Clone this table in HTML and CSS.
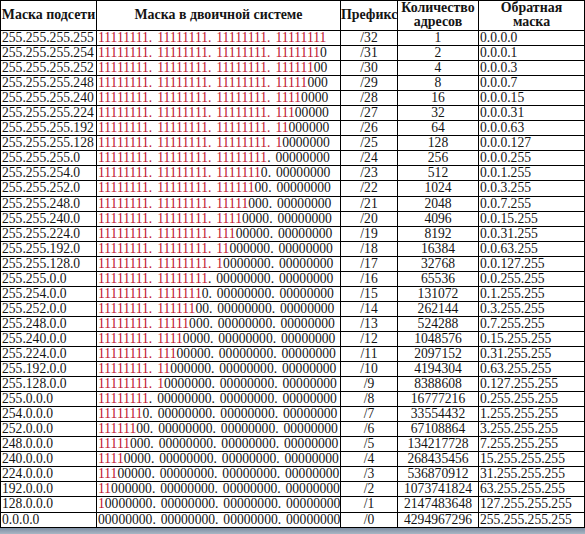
FILE: index.html
```html
<!DOCTYPE html>
<html lang="ru">
<head>
<meta charset="utf-8">
<title>Маски подсети</title>
<link rel="stylesheet" href="styles.css">
</head>
<body>
<div class="page">
<table class="masks">
<colgroup>
<col class="c1"><col class="c2"><col class="c3"><col class="c4"><col class="c5">
</colgroup>
<thead>
<tr><th>Маска подсети</th><th>Маска в двоичной системе</th><th>Префикс</th><th>Количество<br>адресов</th><th>Обратная<br>маска</th></tr>
</thead>
<tbody>
<tr><td>255.255.255.255</td><td class="bin"><span class="on">11111111. 11111111. 11111111. 11111111</span></td><td class="ctr">/32</td><td class="ctr">1</td><td>0.0.0.0</td></tr>
<tr><td>255.255.255.254</td><td class="bin"><span class="on">11111111. 11111111. 11111111. 1111111</span>0</td><td class="ctr">/31</td><td class="ctr">2</td><td>0.0.0.1</td></tr>
<tr><td>255.255.255.252</td><td class="bin"><span class="on">11111111. 11111111. 11111111. 111111</span>00</td><td class="ctr">/30</td><td class="ctr">4</td><td>0.0.0.3</td></tr>
<tr><td>255.255.255.248</td><td class="bin"><span class="on">11111111. 11111111. 11111111. 11111</span>000</td><td class="ctr">/29</td><td class="ctr">8</td><td>0.0.0.7</td></tr>
<tr><td>255.255.255.240</td><td class="bin"><span class="on">11111111. 11111111. 11111111. 1111</span>0000</td><td class="ctr">/28</td><td class="ctr">16</td><td>0.0.0.15</td></tr>
<tr><td>255.255.255.224</td><td class="bin"><span class="on">11111111. 11111111. 11111111. 111</span>00000</td><td class="ctr">/27</td><td class="ctr">32</td><td>0.0.0.31</td></tr>
<tr><td>255.255.255.192</td><td class="bin"><span class="on">11111111. 11111111. 11111111. 11</span>000000</td><td class="ctr">/26</td><td class="ctr">64</td><td>0.0.0.63</td></tr>
<tr><td>255.255.255.128</td><td class="bin"><span class="on">11111111. 11111111. 11111111. 1</span>0000000</td><td class="ctr">/25</td><td class="ctr">128</td><td>0.0.0.127</td></tr>
<tr><td>255.255.255.0</td><td class="bin"><span class="on">11111111. 11111111. 11111111</span>. 00000000</td><td class="ctr">/24</td><td class="ctr">256</td><td>0.0.0.255</td></tr>
<tr><td>255.255.254.0</td><td class="bin"><span class="on">11111111. 11111111. 1111111</span>0. 00000000</td><td class="ctr">/23</td><td class="ctr">512</td><td>0.0.1.255</td></tr>
<tr><td>255.255.252.0</td><td class="bin"><span class="on">11111111. 11111111. 111111</span>00. 00000000</td><td class="ctr">/22</td><td class="ctr">1024</td><td>0.0.3.255</td></tr>
<tr><td>255.255.248.0</td><td class="bin"><span class="on">11111111. 11111111. 11111</span>000. 00000000</td><td class="ctr">/21</td><td class="ctr">2048</td><td>0.0.7.255</td></tr>
<tr><td>255.255.240.0</td><td class="bin"><span class="on">11111111. 11111111. 1111</span>0000. 00000000</td><td class="ctr">/20</td><td class="ctr">4096</td><td>0.0.15.255</td></tr>
<tr><td>255.255.224.0</td><td class="bin"><span class="on">11111111. 11111111. 111</span>00000. 00000000</td><td class="ctr">/19</td><td class="ctr">8192</td><td>0.0.31.255</td></tr>
<tr><td>255.255.192.0</td><td class="bin"><span class="on">11111111. 11111111. 11</span>000000. 00000000</td><td class="ctr">/18</td><td class="ctr">16384</td><td>0.0.63.255</td></tr>
<tr><td>255.255.128.0</td><td class="bin"><span class="on">11111111. 11111111. 1</span>0000000. 00000000</td><td class="ctr">/17</td><td class="ctr">32768</td><td>0.0.127.255</td></tr>
<tr><td>255.255.0.0</td><td class="bin"><span class="on">11111111. 11111111</span>. 00000000. 00000000</td><td class="ctr">/16</td><td class="ctr">65536</td><td>0.0.255.255</td></tr>
<tr><td>255.254.0.0</td><td class="bin"><span class="on">11111111. 1111111</span>0. 00000000. 00000000</td><td class="ctr">/15</td><td class="ctr">131072</td><td>0.1.255.255</td></tr>
<tr><td>255.252.0.0</td><td class="bin"><span class="on">11111111. 111111</span>00. 00000000. 00000000</td><td class="ctr">/14</td><td class="ctr">262144</td><td>0.3.255.255</td></tr>
<tr><td>255.248.0.0</td><td class="bin"><span class="on">11111111. 11111</span>000. 00000000. 00000000</td><td class="ctr">/13</td><td class="ctr">524288</td><td>0.7.255.255</td></tr>
<tr><td>255.240.0.0</td><td class="bin"><span class="on">11111111. 1111</span>0000. 00000000. 00000000</td><td class="ctr">/12</td><td class="ctr">1048576</td><td>0.15.255.255</td></tr>
<tr><td>255.224.0.0</td><td class="bin"><span class="on">11111111. 111</span>00000. 00000000. 00000000</td><td class="ctr">/11</td><td class="ctr">2097152</td><td>0.31.255.255</td></tr>
<tr><td>255.192.0.0</td><td class="bin"><span class="on">11111111. 11</span>000000. 00000000. 00000000</td><td class="ctr">/10</td><td class="ctr">4194304</td><td>0.63.255.255</td></tr>
<tr><td>255.128.0.0</td><td class="bin"><span class="on">11111111. 1</span>0000000. 00000000. 00000000</td><td class="ctr">/9</td><td class="ctr">8388608</td><td>0.127.255.255</td></tr>
<tr><td>255.0.0.0</td><td class="bin"><span class="on">11111111</span>. 00000000. 00000000. 00000000</td><td class="ctr">/8</td><td class="ctr">16777216</td><td>0.255.255.255</td></tr>
<tr><td>254.0.0.0</td><td class="bin"><span class="on">1111111</span>0. 00000000. 00000000. 00000000</td><td class="ctr">/7</td><td class="ctr">33554432</td><td>1.255.255.255</td></tr>
<tr><td>252.0.0.0</td><td class="bin"><span class="on">111111</span>00. 00000000. 00000000. 00000000</td><td class="ctr">/6</td><td class="ctr">67108864</td><td>3.255.255.255</td></tr>
<tr><td>248.0.0.0</td><td class="bin"><span class="on">11111</span>000. 00000000. 00000000. 00000000</td><td class="ctr">/5</td><td class="ctr">134217728</td><td>7.255.255.255</td></tr>
<tr><td>240.0.0.0</td><td class="bin"><span class="on">1111</span>0000. 00000000. 00000000. 00000000</td><td class="ctr">/4</td><td class="ctr">268435456</td><td>15.255.255.255</td></tr>
<tr><td>224.0.0.0</td><td class="bin"><span class="on">111</span>00000. 00000000. 00000000. 00000000</td><td class="ctr">/3</td><td class="ctr">536870912</td><td>31.255.255.255</td></tr>
<tr><td>192.0.0.0</td><td class="bin"><span class="on">11</span>000000. 00000000. 00000000. 00000000</td><td class="ctr">/2</td><td class="ctr">1073741824</td><td>63.255.255.255</td></tr>
<tr><td>128.0.0.0</td><td class="bin"><span class="on">1</span>0000000. 00000000. 00000000. 00000000</td><td class="ctr">/1</td><td class="ctr">2147483648</td><td>127.255.255.255</td></tr>
<tr><td>0.0.0.0</td><td class="bin">00000000. 00000000. 00000000. 00000000</td><td class="ctr">/0</td><td class="ctr">4294967296</td><td>255.255.255.255</td></tr>
</tbody>
</table>
<div class="strip"></div>
</div>
</body>
</html>
```

FILE: styles.css
```css
html, body {
  margin: 0;
  padding: 0;
  background: #ffffff;
}

.page {
  width: 585px;
  height: 534px;
  display: flex;
  flex-direction: column;
  overflow: hidden;
}

.masks {
  border-collapse: collapse;
  table-layout: fixed;
  width: 584px;
  font-family: "Liberation Serif", "Times New Roman", serif;
  font-size: 13.6px;
  color: #141414;
  flex: none;
}

.c1 { width: 96px; }
.c2 { width: 244px; }
.c3 { width: 57px; }
.c4 { width: 81px; }
.c5 { width: 106px; }

.masks th,
.masks td {
  border: 1px solid #000;
  padding: 0 1px;
  line-height: 14.05px;
  white-space: nowrap;
}

.masks td {
  overflow: hidden;
  text-align: left;
}

.masks th {
  font-family: "Liberation Serif", "Times New Roman", serif;
  font-size: 13.9px;
  font-weight: bold;
  text-align: center;
  vertical-align: middle;
  line-height: 14px;
  padding: 0 0 1px;
}

.masks td.bin {
  word-spacing: 1.5px;
}

.masks td.ctr {
  text-align: center;
}

.on {
  color: #c0122e;
}

.strip {
  flex: 1;
  background: linear-gradient(to bottom, #7d8ea3, #a9b6c4);
}
```
